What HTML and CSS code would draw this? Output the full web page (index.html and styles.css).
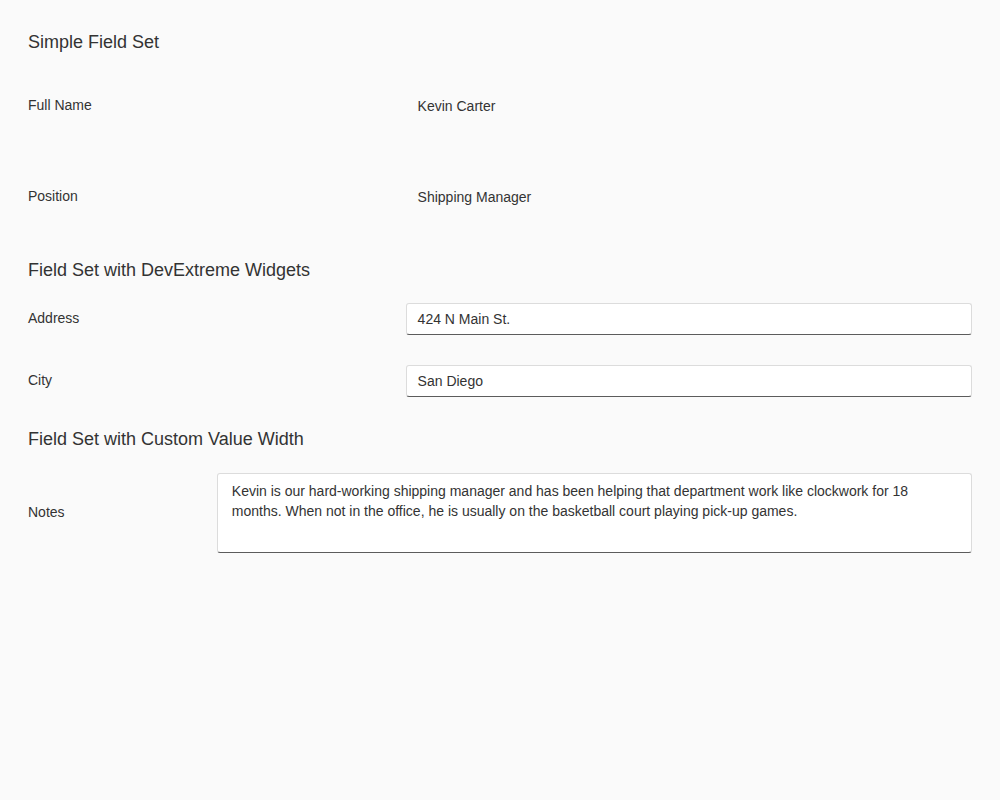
FILE: index.html
```html
<!DOCTYPE html>
<html lang="en">
<head>
<meta charset="utf-8">
<title>Field Set</title>
<link rel="stylesheet" href="styles.css">
</head>
<body>
<div class="form">
  <section class="fieldset fieldset-simple">
    <div class="fieldset-header">Simple Field Set</div>
    <div class="field field-simple">
      <div class="field-label">Full Name</div>
      <div class="field-value field-text">Kevin Carter</div>
    </div>
    <div class="field field-simple">
      <div class="field-label">Position</div>
      <div class="field-value field-text">Shipping Manager</div>
    </div>
  </section>
  <section class="fieldset">
    <div class="fieldset-header">Field Set with DevExtreme Widgets</div>
    <div class="field">
      <div class="field-label">Address</div>
      <div class="field-value"><div class="textbox">424 N Main St.</div></div>
    </div>
    <div class="field">
      <div class="field-label">City</div>
      <div class="field-value"><div class="textbox">San Diego</div></div>
    </div>
  </section>
  <section class="fieldset fieldset-custom">
    <div class="fieldset-header">Field Set with Custom Value Width</div>
    <div class="field field-custom">
      <div class="field-label">Notes</div>
      <div class="field-value"><div class="textarea">Kevin is our hard-working shipping manager and has been helping that department work like clockwork for 18 months. When not in the office, he is usually on the basketball court playing pick-up games.</div></div>
    </div>
  </section>
</div>
</body>
</html>
```
FILE: styles.css
```css
html, body {
  margin: 0;
  padding: 0;
  background: #fafafa;
}
body {
  font-family: "Liberation Sans", Arial, Helvetica, sans-serif;
  font-size: 14px;
  color: #333;
}
.form {
  padding: 30px 28px 0 28px;
}
.fieldset-simple {
  padding-bottom: 1px;
}
.fieldset-header {
  font-size: 18px;
  line-height: 24px;
  margin-bottom: 21px;
}
.fieldset-custom .fieldset-header {
  margin-bottom: 22px;
}
.field {
  display: grid;
  grid-template-columns: 40% 60%;
  align-items: center;
  margin-bottom: 30px;
}
.field-label {
  line-height: 20px;
  padding-bottom: 2px;
}
.field-simple {
  height: 61px;
  align-items: start;
}
.field-simple .field-label {
  padding-top: 20px;
  padding-bottom: 0;
}
.field-custom {
  grid-template-columns: 20% 80%;
}
.field-text {
  padding-left: 12px;
  padding-top: 21px;
  line-height: 20px;
}
.textbox {
  box-sizing: border-box;
  height: 32px;
  background: #fff;
  border: 1px solid #dcdcdc;
  border-bottom-color: #5c5c5c;
  border-radius: 3px;
  padding: 0 11px;
  line-height: 30px;
}
.textarea {
  box-sizing: border-box;
  height: 80px;
  background: #fff;
  border: 1px solid #dcdcdc;
  border-bottom-color: #5c5c5c;
  border-radius: 3px;
  padding: 7px 14px;
  line-height: 20px;
}
```
